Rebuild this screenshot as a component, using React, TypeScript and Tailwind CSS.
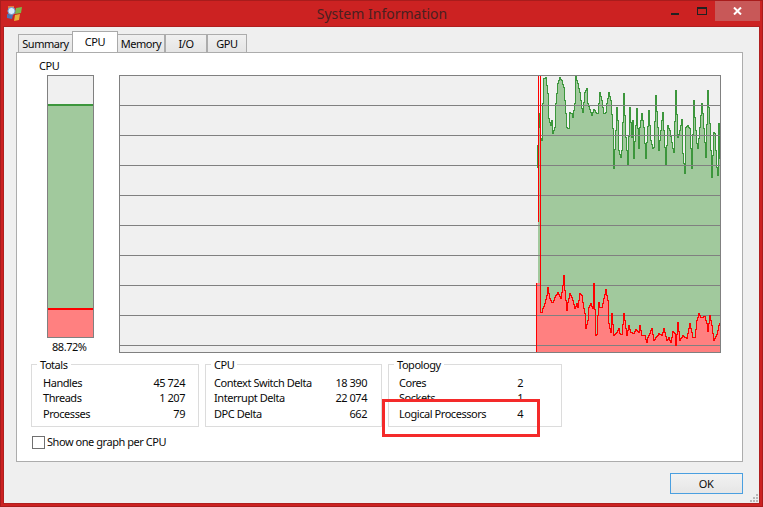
const font = { fontFamily: '"Noto Sans", "Open Sans", sans-serif' };

const green: [number, number][] = [[55,225],[57,130],[60,170],[63,205],[67,210],[70,100],[73,25],[79,22],[83,70],[88,145],[92,165],[96,150],[100,190],[104,170],[108,100],[115,40],[121,20],[127,30],[133,50],[138,130],[142,170],[146,175],[150,125],[155,130],[160,140],[165,100],[169,18],[175,40],[181,65],[185,115],[190,125],[195,65],[200,55],[205,100],[212,125],[217,135],[222,118],[230,128],[235,130],[240,65],[245,90],[252,130],[257,125],[262,100],[268,65],[273,90],[278,175],[283,295],[287,180],[290,110],[294,150],[298,240],[302,260],[306,240],[312,70],[317,200],[321,240],[325,285],[330,110],[335,200],[338,150],[342,265],[350,115],[356,235],[360,170],[366,130],[372,170],[379,265],[386,120],[394,210],[398,235],[402,232],[408,75],[413,170],[418,240],[425,150],[430,125],[438,285],[445,165],[450,180],[458,235],[463,245],[469,60],[474,200],[480,180],[486,148],[490,250],[494,310],[499,170],[504,165],[510,175],[516,295],[522,90],[526,140],[532,220],[535,235],[540,170],[546,100],[550,130],[557,260],[565,60],[570,160],[577,320],[582,185],[586,190],[590,290],[595,315],[598,160],[600,265]];

const red: [number, number][] = [[60,155],[65,155],[70,145],[75,130],[80,105],[85,80],[90,115],[95,125],[100,125],[105,110],[115,95],[122,115],[128,75],[132,45],[136,90],[140,150],[145,125],[150,100],[155,110],[160,120],[165,145],[170,130],[175,140],[180,100],[185,105],[190,125],[195,160],[198,205],[203,180],[208,140],[213,130],[218,145],[223,68],[227,225],[229,275],[233,165],[236,125],[241,140],[247,140],[252,115],[258,88],[263,120],[268,190],[272,215],[277,158],[282,225],[290,215],[296,205],[300,220],[306,222],[312,160],[316,180],[322,225],[328,195],[334,215],[342,218],[348,208],[356,215],[360,195],[366,225],[374,225],[380,245],[385,230],[395,205],[403,240],[410,228],[416,218],[426,225],[433,205],[440,240],[446,232],[452,245],[458,212],[464,220],[469,255],[475,185],[481,240],[490,225],[500,235],[510,190],[518,232],[524,232],[530,180],[536,160],[542,170],[555,168],[560,190],[564,212],[570,165],[576,195],[582,240],[590,222],[598,195],[600,190]];

const toGreen = ([x, y]: [number, number]) => [Math.round(x / 3 + 400), Math.round(y / 3 - 6)];
const toRed = ([x, y]: [number, number]) => [Math.round(x / 3 + 400), Math.round(y / 3 + 184)];

function steps(pts: number[][]) {
  let out = `${pts[0][0]},${pts[0][1]}`;
  for (let i = 1; i < pts.length; i++) {
    const [ax, ay] = pts[i - 1];
    const [bx, by] = pts[i];
    for (let x = ax + 1; x <= bx; x++) {
      const y = Math.round(ay + ((by - ay) * (x - ax)) / (bx - ax));
      out += ` ${x - 1},${y} ${x},${y}`;
    }
  }
  return out;
}

const gridLines = [29, 59, 89, 119, 149, 179, 209, 239, 269];

function Graph() {
  const g = steps(green.map(toGreen));
  const r = steps(red.map(toRed));
  return (
    <svg width="600" height="276" viewBox="0 0 600 276" shapeRendering="crispEdges" className="block">
      <polygon points={`418,276 ${g} 600,276`} fill="#a1c99d" />
      <polygon points={`416,276 416,207 420,207 ${r} 600,276`} fill="#ff8080" />
      <polyline points={g} fill="none" stroke="#3c963c" strokeWidth="1" />
      {gridLines.map((y) => (
        <line key={y} x1="0" x2="600" y1={y + 0.5} y2={y + 0.5} stroke="#808080" strokeWidth="1" />
      ))}
      <polyline points={r} fill="none" stroke="#ff0000" strokeWidth="1" />
      <line x1="417.5" x2="417.5" y1="69" y2="92" stroke="#3c963c" />
      <line x1="418.5" x2="418.5" y1="0" y2="146" stroke="#ff0000" />
      <line x1="420.5" x2="420.5" y1="0" y2="236" stroke="#ff0000" />
      <line x1="416.5" x2="416.5" y1="207" y2="276" stroke="#ff0000" />
    </svg>
  );
}

function Group({ title, w, rows, vw }: { title: string; w: string; rows: [string, string][]; vw: string }) {
  return (
    <div className={`relative border border-[#dcdcdc] h-[63px] pt-[10px] pl-[11px] ${w}`}>
      <span className="absolute -top-[8px] left-[5px] bg-white px-[3px] leading-[16px]">{title}</span>
      {rows.map(([k, v]) => (
        <div key={k} className="flex h-[15.5px] items-center">
          <span className="whitespace-nowrap">{k}</span>
          <span className={`ml-auto text-right whitespace-nowrap ${vw}`}>{v}</span>
        </div>
      ))}
    </div>
  );
}

function Tab({ label, w, active }: { label: string; w: string; active?: boolean }) {
  return active ? (
    <div className={`relative z-10 -mx-px h-[21px] bg-white border border-b-0 border-[#a9a9a9] text-center leading-[19px] ${w}`}>{label}</div>
  ) : (
    <div className={`h-[18px] border border-b-0 border-[#acacac] bg-gradient-to-b from-[#f0f0f0] to-[#e5e5e5] text-center leading-[18px] ${w}`}>{label}</div>
  );
}

export default function App() {
  return (
    <div style={font} className="relative w-[763px] h-[507px] overflow-hidden bg-[#cc2222] text-[11px] tracking-[-0.45px] text-[#0a0a0a] shadow-[inset_0_0_0_1px_#a81c1c]">
      {/* Title bar */}
      <div className="h-[27px] flex items-center relative">
        <svg width="17" height="17" viewBox="0 0 17 17" className="absolute left-[6px] top-[5px]">
          <path d="M10 3 L16 2 L15 8 L9 9 Z" fill="#7db84a" />
          <path d="M9 10 L14 9 L13 15 L8 16 Z" fill="#e8b23a" />
          <path d="M2 1 L8 1 L8 5 L2 5 Z" fill="#e8763a" />
          <path d="M1 9 L7 10 L6 14 L1 13 Z" fill="#4a76b8" />
          <circle cx="5.5" cy="6" r="3.6" fill="#d6ecfc" stroke="#6a9ad0" />
        </svg>
        <div className="w-full text-center text-[14px] tracking-normal text-[#4a2020] -mt-px pl-[1px]">System Information</div>
        <div className="absolute left-[671px] top-[13px] w-[8px] h-[2px] bg-[#222]" />
        <div className="absolute left-[697px] top-[7px] w-[10px] h-[8px] border border-t-2 border-[#222]" />
        <div className="absolute left-[715px] top-px w-[45px] h-[20px] bg-[#c85858] flex items-center justify-center">
          <svg width="9" height="8" viewBox="0 0 9 8">
            <path d="M1 0.5 L8 7.5 M8 0.5 L1 7.5" stroke="#fff" strokeWidth="2" />
          </svg>
        </div>
      </div>

      {/* Client area */}
      <div className="mx-[4px] h-[476px] bg-[#efefef] relative pl-[12px] pt-[5px] ring-1 ring-[#b01f1f]">
        <div className="flex items-end h-[20px] pl-[2px]">
          <Tab label="Summary" w="w-[55px]" />
          <Tab label="CPU" w="w-[46px]" active />
          <Tab label="Memory" w="w-[48px]" />
          <Tab label="I/O" w="w-[42px]" />
          <Tab label="GPU" w="w-[40px]" />
        </div>
        <div className="w-[727px] h-[410px] bg-white border border-[#acacac] pt-[4px] pl-[14px]">
          <div className="flex h-[307px]">
            <div className="w-[62px] shrink-0 flex flex-col items-start">
              <div className="leading-[17px] pl-[8px] h-[18px]">CPU</div>
              <div className="ml-[16px] w-[47px] h-[263px] bg-[#f0f0f0] border border-[#808080] flex flex-col justify-end">
                <div className="h-[204px] bg-[#a1c99d] border-t-2 border-[#3c963c]" />
                <div className="h-[29px] bg-[#ff8080] border-t-2 border-[#ff0000]" />
              </div>
              <div className="ml-[21px] mt-[2px] leading-[14px] whitespace-nowrap">88.72%</div>
            </div>
            <div className="ml-[26px] mt-[18px] w-[602px] h-[278px] bg-[#f0f0f0] border border-[#808080]">
              <Graph />
            </div>
          </div>
          <div className="flex">
            <Group title="Totals" w="w-[168px]" vw="mr-[13px]"
              rows={[["Handles", "45 724"], ["Threads", "1 207"], ["Processes", "79"]]} />
            <div className="ml-[6px]">
              <Group title="CPU" w="w-[177px] !pl-[8px]" vw="mr-[14px]"
                rows={[["Context Switch Delta", "18 390"], ["Interrupt Delta", "22 074"], ["DPC Delta", "662"]]} />
            </div>
            <div className="ml-[6px]">
              <Group title="Topology" w="w-[174px] !pl-[10px]" vw="mr-[38px]"
                rows={[["Cores", "2"], ["Sockets", "1"], ["Logical Processors", "4"]]} />
            </div>
          </div>
          <div className="flex items-center mt-[7px] ml-[1px] h-[16px]">
            <div className="w-[13px] h-[13px] border border-[#707070] bg-white mr-[2px]" />
            <span>Show one graph per CPU</span>
          </div>
        </div>
        <div className="absolute left-[666px] top-[446px] w-[73px] h-[21px] border border-[#4a9fe0] bg-gradient-to-b from-[#f2f2f2] to-[#e6e6e6] text-center leading-[20px] pr-px">OK</div>
        <div className="absolute right-[1px] bottom-[1px] grid grid-cols-3 gap-px">
          {[0, 0, 1, 0, 1, 1, 1, 1, 1].map((v, i) => (
            <div key={i} className={`w-[2px] h-[2px] ${v ? "bg-[#b8b8b8]" : ""}`} />
          ))}
        </div>
      </div>

      {/* Annotation */}
      <div className="absolute left-[382px] top-[399px] w-[158px] h-[38px] border-[3px] border-[#f42a2a]" />
    </div>
  );
}
